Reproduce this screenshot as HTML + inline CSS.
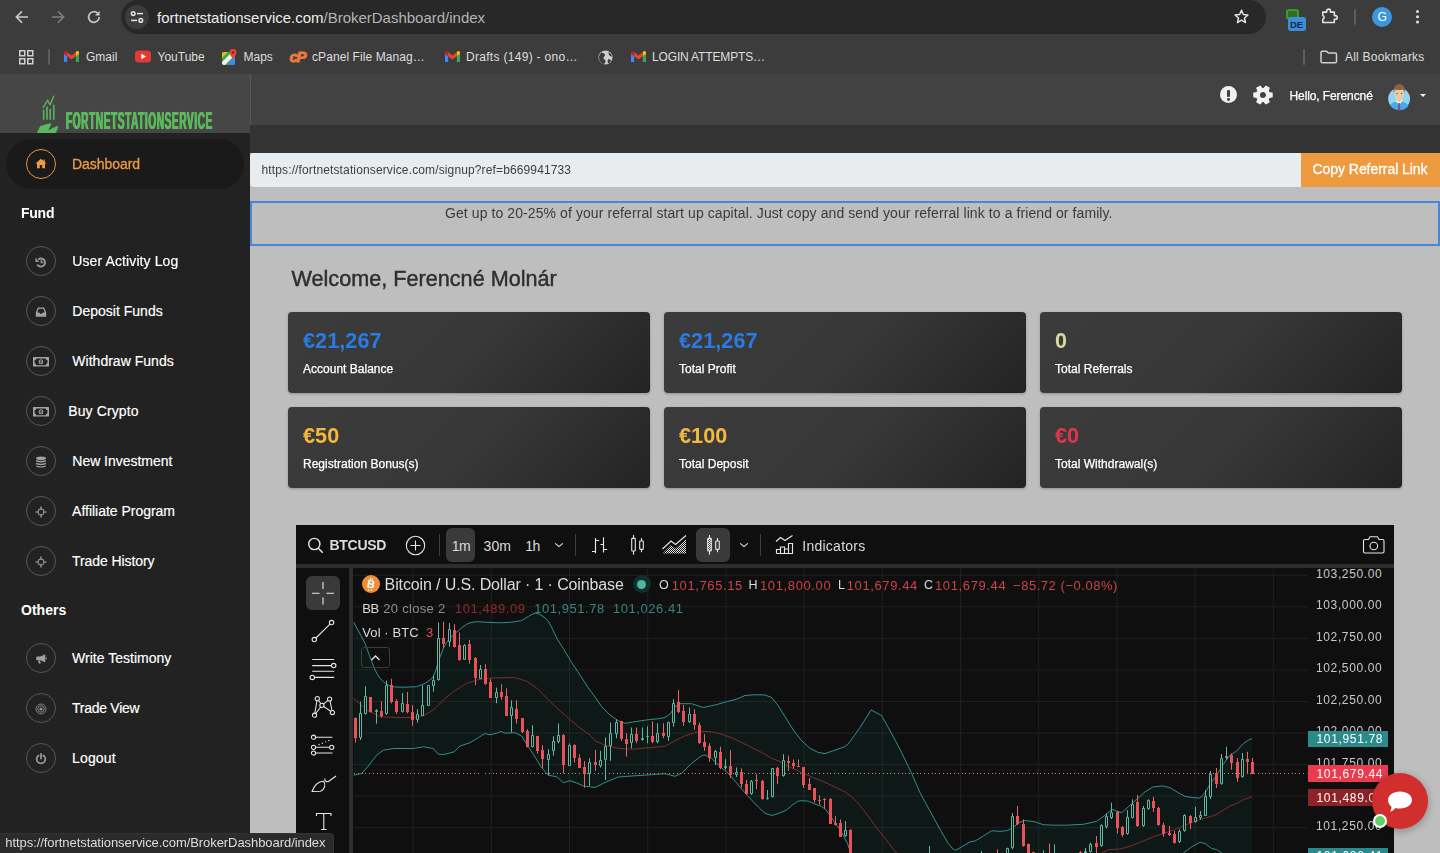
<!DOCTYPE html>
<html>
<head>
<meta charset="utf-8">
<title>Broker Dashboard</title>
<style>
*{box-sizing:border-box;margin:0;padding:0}
html,body{width:1440px;height:853px;overflow:hidden;background:#bebebe;font-family:"Liberation Sans",sans-serif;}
.abs{position:absolute}
#root{position:relative;width:1440px;height:853px;overflow:hidden;opacity:0.9999;will-change:opacity}
.t{position:absolute;white-space:nowrap;line-height:1;letter-spacing:0.01px}
/* browser chrome */
#chrome{left:0;top:0;width:1440px;height:74px;background:#3c3c3c}
#urlpill{left:120.500px;top:0;width:1145px;height:34px;border-radius:17px;background:#282828}
#siteinfo{left:125px;top:5px;width:24px;height:24px;border-radius:12px;background:#3c3c3c}
/* page */
#sbhead{left:0;top:74px;width:250px;height:59px;background:#464646}
#sidebar{left:0;top:133px;width:250px;height:720px;background:#222222}
#topbar{left:250px;top:74px;width:1190px;height:51px;background:#424242;border-left:1px solid #575757}
#band{left:250px;top:125px;width:1190px;height:28px;background:#333333}
#refinput{left:250px;top:153px;width:1051px;height:34px;background:#e9ecef;border-radius:4px 0 0 4px}
#refbtn{left:1301px;top:153px;width:139px;height:34px;background:#ee9b40}
#info{left:250px;top:201px;width:1190px;height:45px;border:2px solid #4786d8;background:#bebebe}
.bm{font-size:12px;color:#dedede}
.nav-c{position:absolute;width:30px;height:30px;border-radius:50%;border:1.200px solid #575757}
.nav-t{position:absolute;white-space:nowrap;color:#fff;font-size:15px;line-height:1;letter-spacing:0.01px;-webkit-text-stroke:0.18px #fff}
.card{position:absolute;width:362px;height:81px;border-radius:4px;background:linear-gradient(135deg,#3b3b3b 0%,#383838 50%,#232323 100%);box-shadow:0 1px 3px rgba(0,0,0,.25)}
.card .v{position:absolute;left:15px;top:18px;font-size:21.600px;font-weight:bold;line-height:1;white-space:nowrap;letter-spacing:0.08px}
.card .l{position:absolute;left:15px;top:51px;font-size:12px;color:#fff;line-height:1;white-space:nowrap;letter-spacing:0.01px;-webkit-text-stroke:0.25px #fff}
</style>
</head>
<body>
<div id="root">

<!-- ===== BROWSER CHROME ===== -->
<div id="chrome" class="abs"></div>
<div id="urlpill" class="abs"></div>
<div id="siteinfo" class="abs"></div>
<!--CHROME-ICONS-->
<!-- nav arrows -->
<svg class="abs" style="left:14px;top:9px" width="16" height="16" viewBox="0 0 16 16"><path d="M14 8H2.6M8 2.4L2.4 8L8 13.6" fill="none" stroke="#c7c7c7" stroke-width="1.7"/></svg>
<svg class="abs" style="left:50px;top:9px" width="16" height="16" viewBox="0 0 16 16"><path d="M2 8H13.4M8 2.4L13.6 8L8 13.6" fill="none" stroke="#7d7d7d" stroke-width="1.7"/></svg>
<svg class="abs" style="left:86px;top:9px" width="16" height="16" viewBox="0 0 16 16"><path d="M13.2 8A5.3 5.3 0 1 1 11.6 4.2" fill="none" stroke="#c7c7c7" stroke-width="1.7"/><path d="M13.6 1.8V6.4H9z" fill="#c7c7c7"/></svg>
<!-- site info icon -->
<svg class="abs" style="left:129px;top:9px" width="16" height="16" viewBox="0 0 16 16"><g fill="none" stroke="#e3e3e3" stroke-width="1.5"><circle cx="4.2" cy="4.6" r="1.8"/><path d="M8 4.6H14"/><circle cx="11.8" cy="11.4" r="1.8"/><path d="M2 11.4H8"/></g></svg>
<div class="t" style="left:157px;top:9.500px;font-size:15px;color:#ededed;letter-spacing:-0.01px">fortnetstationservice.com<span style="color:#b4b4b4">/BrokerDashboard/index</span></div>
<!-- star -->
<svg class="abs" style="left:1233px;top:8px" width="17" height="17" viewBox="0 0 24 24"><path d="M12 3.2l2.6 6 6.5.6-4.9 4.3 1.5 6.400-5.700-3.400-5.700 3.400 1.500-6.400-4.900-4.300 6.500-.6z" fill="none" stroke="#e3e3e3" stroke-width="2.1" stroke-linejoin="round"/></svg>
<!-- extension DE -->
<div class="abs" style="left:1286px;top:9px;width:13px;height:10px;border:2px solid #3f9a2e;border-radius:3px 3px 0 0;background:#2f6f24"></div>
<div class="abs" style="left:1288px;top:17px;width:18px;height:14px;border-radius:3px;background:#3f8fd6"></div>
<div class="t" style="left:1290px;top:19.500px;font-size:9.500px;font-weight:bold;color:#0b2a55;letter-spacing:-0.2px">DE</div>
<!-- puzzle -->
<svg class="abs" style="left:1319.500px;top:7px" width="18.500" height="17.600" viewBox="0 0 20 19"><path d="M3 5.500H7.300V4.300A2 2 0 0 1 11.300 4.300V5.500H15.500V9.300H16.600A2 2 0 0 1 16.600 13.300H15.500V16.800H3V13.200A2.100 2.100 0 0 0 3 9.200Z" fill="none" stroke="#e3e3e3" stroke-width="1.7" stroke-linejoin="round"/></svg>
<div class="abs" style="left:1354px;top:9px;width:2px;height:16px;background:#5e5e5e;border-radius:1px"></div>
<div class="abs" style="left:1372px;top:7px;width:20px;height:20px;border-radius:10px;background:#3d97de"></div>
<div class="t" style="left:1377.500px;top:11px;font-size:12px;color:#fff">G</div>
<div class="abs" style="left:1416px;top:10px;width:3.400px;height:3.400px;border-radius:2px;background:#e3e3e3;box-shadow:0 5.300px 0 #e3e3e3,0 10.600px 0 #e3e3e3"></div>
<!-- bookmarks bar -->
<svg class="abs" style="left:19px;top:50px" width="15" height="15" viewBox="0 0 15 15"><g fill="none" stroke="#d0d0d0" stroke-width="1.500"><rect x=".75" y=".75" width="5" height="5"/><rect x="8.750" y=".75" width="5" height="5"/><rect x=".75" y="8.750" width="5" height="5"/><rect x="8.750" y="8.750" width="5" height="5"/></g></svg>
<div class="abs" style="left:48px;top:49px;width:2px;height:16px;background:#5e5e5e;border-radius:1px"></div>
<!-- gmail icons -->
<svg class="abs gm" style="left:64px;top:51px" width="15" height="12" viewBox="0 0 15 12"><path d="M0 1.500V11h3.200V5.200z" fill="#4285f4"/><path d="M15 1.500V11h-3.200V5.200z" fill="#34a853"/><path d="M11.800 1.200V5.200L15 2.900V1.800C15 .3 13.400-.4 12.300.5z" fill="#fbbc04"/><path d="M3.200 1.200V5.200L0 2.900V1.800C0 .3 1.600-.4 2.700.5z" fill="#c5221f"/><path d="M3.200 5.200V1.200L7.500 4.400L11.800 1.200V5.200L7.500 8.400z" fill="#ea4335"/></svg>
<div class="t bm" style="left:86px;top:51px">Gmail</div>
<svg class="abs" style="left:135px;top:50px" width="16" height="13" viewBox="0 0 16 13"><rect x="0" y=".500" width="16" height="12" rx="3.500" fill="#e53935"/><path d="M6.300 3.800V9.200L11 6.500z" fill="#fff"/></svg>
<div class="t bm" style="left:157.500px;top:51px">YouTube</div>
<!-- maps -->
<svg class="abs" style="left:222px;top:49px" width="15" height="16" viewBox="0 0 15 16"><rect x="0" y="3" width="13" height="13" rx="2" fill="#34a853"/><path d="M0 13L9 4H13V6L3 16H2A2 2 0 0 1 0 14z" fill="#f1f1f1"/><path d="M5 16L13 8V14A2 2 0 0 1 11 16z" fill="#4285f4"/><path d="M0 5A2 2 0 0 1 2 3H6L0 9z" fill="#fbbc04" opacity=".9"/><path d="M11 0A3.500 3.500 0 0 1 14.500 3.500C14.500 6 11 9.500 11 9.500S7.500 6 7.500 3.500A3.500 3.500 0 0 1 11 0z" fill="#ea4335"/><circle cx="11" cy="3.500" r="1.200" fill="#8e1a13"/></svg>
<div class="t bm" style="left:243.500px;top:51px">Maps</div>
<!-- cpanel -->
<div class="t" style="left:289.500px;top:48.500px;font-size:15px;font-weight:bold;font-style:italic;color:#ee7a3a;letter-spacing:-1.300px;-webkit-text-stroke:0.900px #ee7a3a">cP</div>
<div class="t bm" style="left:312px;top:51px;letter-spacing:0.08px">cPanel File Manag…</div>
<svg class="abs" style="left:445px;top:51px" width="15" height="12" viewBox="0 0 15 12"><path d="M0 1.500V11h3.200V5.200z" fill="#4285f4"/><path d="M15 1.500V11h-3.200V5.200z" fill="#34a853"/><path d="M11.800 1.200V5.200L15 2.900V1.800C15 .3 13.400-.4 12.300.5z" fill="#fbbc04"/><path d="M3.200 1.200V5.200L0 2.900V1.800C0 .3 1.600-.4 2.700.5z" fill="#c5221f"/><path d="M3.200 5.200V1.200L7.500 4.400L11.800 1.200V5.200L7.500 8.400z" fill="#ea4335"/></svg>
<div class="t bm" style="left:466px;top:51px;letter-spacing:0.300px">Drafts (149) - ono…</div>
<!-- globe -->
<svg class="abs" style="left:598px;top:50px" width="15" height="15" viewBox="0 0 15 15"><circle cx="7.500" cy="7.500" r="7" fill="#d0d0d0"/><path d="M3.500 2.500C5 3.500 6.500 3 7 4.500S5 7 5.500 8.500S8 9.500 7.500 11.500S6 13.500 6.500 14.300C3 13.500 1 11 1 7.500C1 5.500 2 3.500 3.500 2.500zM10 2C11 3 10.500 4.500 11.500 5.500S13.500 6 14 7C14 5 12.500 2.800 10 2zM10 9.500C11 9 12.500 9.500 13 10.500C12.500 12 11.500 13 10 13.500C9.500 12.500 9.500 10.500 10 9.500z" fill="#3c3c3c"/></svg>
<svg class="abs" style="left:631px;top:51px" width="15" height="12" viewBox="0 0 15 12"><path d="M0 1.500V11h3.200V5.200z" fill="#4285f4"/><path d="M15 1.500V11h-3.200V5.200z" fill="#34a853"/><path d="M11.800 1.200V5.200L15 2.900V1.800C15 .3 13.400-.4 12.300.5z" fill="#fbbc04"/><path d="M3.200 1.200V5.200L0 2.900V1.800C0 .3 1.600-.4 2.700.5z" fill="#c5221f"/><path d="M3.200 5.200V1.200L7.500 4.400L11.800 1.200V5.200L7.500 8.400z" fill="#ea4335"/></svg>
<div class="t bm" style="left:652px;top:51px;letter-spacing:-0.150px">LOGIN ATTEMPTS…</div>
<div class="abs" style="left:1303px;top:49px;width:2px;height:16px;background:#5e5e5e;border-radius:1px"></div>
<svg class="abs" style="left:1320px;top:50px" width="18" height="14" viewBox="0 0 18 14"><path d="M1 2.500A1.300 1.300 0 0 1 2.300 1.200H6.500L8.300 3H15.200A1.300 1.300 0 0 1 16.500 4.300V11.500A1.300 1.300 0 0 1 15.200 12.800H2.300A1.300 1.300 0 0 1 1 11.500z" fill="none" stroke="#d0d0d0" stroke-width="1.500"/></svg>
<div class="t bm" style="left:1345px;top:51px;letter-spacing:0.220px">All Bookmarks</div>
<!--CHROME-ICONS-END-->

<!-- ===== PAGE ===== -->
<div id="sbhead" class="abs"></div>
<div id="sidebar" class="abs"></div>
<div id="topbar" class="abs"></div>
<div id="band" class="abs"></div>
<div id="refinput" class="abs"></div>
<div id="refbtn" class="abs"></div>
<div id="info" class="abs"></div>
<!--PAGE-CONTENT-->
<svg class="abs" style="left:34px;top:92px" width="28" height="41" viewBox="0 0 28 41">
<g fill="#5cb85c">
<rect x="8.800" y="17.700" width="1.700" height="10" opacity=".92"/><rect x="12.150" y="14.500" width="1.700" height="13.200" opacity=".92"/><rect x="15.350" y="16.800" width="1.700" height="10.900" opacity=".92"/><rect x="18.900" y="12.700" width="1.700" height="15" opacity=".92"/>
<path d="M9.200 15.400L13.600 8.300L15.900 13L19.750 4.200" fill="none" stroke="#5cb85c" stroke-width="1.350" stroke-linejoin="round" stroke-linecap="round"/>
<path d="M3 40.600L6.300 34.100L14.200 31.800L16.500 31.200C17.300 32 17.200 32.800 16.800 33.500L14.200 38.200L23 34.100C23.900 34.500 24.100 35.300 23.900 35.900L21.800 41H3z"/>
</g></svg>
<div class="t" style="left:65.900px;top:110.030px;font-size:23px;font-weight:bold;color:#5cb85c;transform-origin:0 0;transform:scaleX(0.437);letter-spacing:1.400px;text-shadow:0.900px 0 0 #5cb85c,-0.900px 0 0 #5cb85c,0 0 1.200px rgba(92,184,92,.7)">FORTNETSTATIONSERVICE</div>
<div class="abs" style="left:6px;top:139px;width:238px;height:50px;border-radius:25px;background:#1a1a1a"></div>
<div class="abs" style="left:25.500px;top:148.500px;width:30.500px;height:30.500px;border-radius:50%;border:1.200px solid #e8953e"></div>
<svg class="abs" style="left:35px;top:158px" width="12" height="11" viewBox="0 0 12 11"><path d="M6 .8L.5 5.600H2V10.200H4.800V7H7.200V10.200H10V5.600H11.500L9.800 4.100V1.500H8.600V3z" fill="#ee9b40"/></svg>
<div class="t" style="left:72px;top:157.15px;font-size:14px;color:#ee9b40;letter-spacing:-0.05px;-webkit-text-stroke:0.300px #ee9b40">Dashboard</div>
<div class="t" style="left:21px;top:206.15px;font-size:14px;color:#fff;font-weight:bold;letter-spacing:-0.25px">Fund</div>
<div class="t" style="left:21px;top:603.15px;font-size:14px;color:#fff;font-weight:bold">Others</div>
<div class="nav-c" style="left:26px;top:246px"></div>
<svg class="abs" style="left:35px;top:255.6px;overflow:visible" width="12" height="12" viewBox="0 0 12 12"><g transform="translate(0,0.200)"><path d="M3.300 3.200A4.100 4.100 0 1 1 2.300 8.300" fill="none" stroke="#979797" stroke-width="1.900"/><path d="M.4 1.600L.4 5.700H4.500z" fill="#979797"/><path d="M6.300 3.900V6.300H8.300" fill="none" stroke="#979797" stroke-width="1.300"/></g></svg>
<div class="nav-t" style="left:72.3px;top:254.15px;font-size:14px;color:#fff;letter-spacing:0.108px">User Activity Log</div>
<div class="nav-c" style="left:26px;top:296px"></div>
<svg class="abs" style="left:35px;top:305.6px;overflow:visible" width="12" height="12" viewBox="0 0 12 12"><path d="M.8 10.700V6.500L2.900 1.400H9.100L11.200 6.500V10.700zM3.700 2.800L2.300 6.400H4.200L5 7.700H7L7.800 6.400H9.700L8.300 2.800z" fill="#a4a4a4" fill-rule="evenodd"/></svg>
<div class="nav-t" style="left:72.3px;top:304.15px;font-size:14px;color:#fff;letter-spacing:0.01px">Deposit Funds</div>
<div class="nav-c" style="left:26px;top:346px"></div>
<svg class="abs" style="left:35px;top:355.6px;overflow:visible" width="12" height="12" viewBox="0 0 12 12"><g transform="translate(-2,1.100)"><rect x="0" y="0" width="16" height="9.400" rx=".6" fill="#a4a4a4"/><path d="M3.200 1.300H12.800C12.800 2.200 13.500 2.900 14.400 2.900V6.500C13.500 6.500 12.800 7.200 12.800 8.100H3.200C3.200 7.200 2.500 6.500 1.600 6.500V2.900C2.500 2.900 3.200 2.200 3.200 1.300z" fill="#222"/><ellipse cx="8" cy="4.700" rx="2.300" ry="2.500" fill="#b0b0b0"/><path d="M7.200 3.300H8.800V6.100H7.200zM7.200 4.500H8.800" fill="none" stroke="#333" stroke-width=".7"/></g></svg>
<div class="nav-t" style="left:72.3px;top:354.15px;font-size:14px;color:#fff;letter-spacing:0.02px">Withdraw Funds</div>
<div class="nav-c" style="left:26px;top:396px"></div>
<svg class="abs" style="left:35px;top:405.6px;overflow:visible" width="12" height="12" viewBox="0 0 12 12"><g transform="translate(-2,1.100)"><rect x="0" y="0" width="16" height="9.400" rx=".6" fill="#a4a4a4"/><path d="M3.200 1.300H12.800C12.800 2.200 13.500 2.900 14.400 2.900V6.500C13.500 6.500 12.800 7.200 12.800 8.100H3.200C3.200 7.200 2.500 6.500 1.600 6.500V2.900C2.500 2.900 3.200 2.200 3.200 1.300z" fill="#222"/><ellipse cx="8" cy="4.700" rx="2.300" ry="2.500" fill="#b0b0b0"/><path d="M7.200 3.300H8.800V6.100H7.200zM7.200 4.500H8.800" fill="none" stroke="#333" stroke-width=".7"/></g></svg>
<div class="nav-t" style="left:68.2px;top:404.15px;font-size:14px;color:#fff;letter-spacing:0.117px">Buy Crypto</div>
<div class="nav-c" style="left:26px;top:446px"></div>
<svg class="abs" style="left:35px;top:455.6px;overflow:visible" width="12" height="12" viewBox="0 0 12 12"><ellipse cx="6" cy="2.300" rx="5" ry="1.800" fill="#a0a0a0"/><path d="M1 3.700C2 5.200 10 5.200 11 3.700V5.300C10 6.800 2 6.800 1 5.300z" fill="#a0a0a0"/><path d="M1 6.500C2 8 10 8 11 6.500V8.100C10 9.600 2 9.600 1 8.100z" fill="#a0a0a0"/><path d="M1 9.300C2 10.800 10 10.800 11 9.300V10.200C10 12 2 12 1 10.200z" fill="#a0a0a0"/></svg>
<div class="nav-t" style="left:72.3px;top:454.15px;font-size:14px;color:#fff;letter-spacing:-0.02px">New Investment</div>
<div class="nav-c" style="left:26px;top:496px"></div>
<svg class="abs" style="left:35px;top:505.6px;overflow:visible" width="12" height="12" viewBox="0 0 12 12"><circle cx="6" cy="6" r="2.900" fill="none" stroke="#8c8c8c" stroke-width="1.100"/><path d="M6 .6V3.200M6 8.800V11.400M.6 6H3.200M8.800 6H11.400" stroke="#8c8c8c" stroke-width="1.600"/></svg>
<div class="nav-t" style="left:72.1px;top:504.15px;font-size:14px;color:#fff;letter-spacing:-0.02px">Affiliate Program</div>
<div class="nav-c" style="left:26px;top:546px"></div>
<svg class="abs" style="left:35px;top:555.6px;overflow:visible" width="12" height="12" viewBox="0 0 12 12"><circle cx="6" cy="6" r="2.900" fill="none" stroke="#8c8c8c" stroke-width="1.100"/><path d="M6 .6V3.200M6 8.800V11.400M.6 6H3.200M8.800 6H11.400" stroke="#8c8c8c" stroke-width="1.600"/></svg>
<div class="nav-t" style="left:72.1px;top:554.15px;font-size:14px;color:#fff;letter-spacing:-0.093px">Trade History</div>
<div class="nav-c" style="left:26px;top:643px"></div>
<svg class="abs" style="left:35px;top:652.6px;overflow:visible" width="12" height="12" viewBox="0 0 12 12"><path d="M10.200 1.200V9.400L5.400 7.200H2.200A1 1 0 0 1 1.200 6.200V4.400A1 1 0 0 1 2.200 3.400H5.400z" fill="#a0a0a0"/><path d="M3 7.400H5L5.800 10.600H3.800z" fill="#a0a0a0"/><rect x="10.600" y="4.200" width="1" height="2.200" fill="#a0a0a0"/></svg>
<div class="nav-t" style="left:72.1px;top:651.15px;font-size:14px;color:#fff;letter-spacing:0.01px">Write Testimony</div>
<div class="nav-c" style="left:26px;top:693px"></div>
<svg class="abs" style="left:35px;top:702.6px;overflow:visible" width="12" height="12" viewBox="0 0 12 12"><circle cx="6" cy="6" r="5" fill="none" stroke="#808080" stroke-width="1"/><circle cx="6" cy="6" r="3.200" fill="none" stroke="#808080" stroke-width="1"/><circle cx="6" cy="6" r="1.600" fill="#909090"/></svg>
<div class="nav-t" style="left:72.1px;top:701.15px;font-size:14px;color:#fff;letter-spacing:-0.283px">Trade View</div>
<div class="nav-c" style="left:26px;top:743px"></div>
<svg class="abs" style="left:35px;top:752.6px;overflow:visible" width="12" height="12" viewBox="0 0 12 12"><path d="M3.600 2.600A4.300 4.300 0 1 0 8.400 2.600" fill="none" stroke="#979797" stroke-width="1.800" stroke-linecap="round"/><path d="M6 .8V5.600" stroke="#979797" stroke-width="1.800" stroke-linecap="round"/></svg>
<div class="nav-t" style="left:72.1px;top:751.15px;font-size:14px;color:#fff;letter-spacing:0.134px">Logout</div>
<div class="abs" style="left:1220.200px;top:86.100px;width:17px;height:17px;border-radius:50%;background:#f1f1f1"></div>
<div class="abs" style="left:1227.300px;top:89.500px;width:2.600px;height:7px;border-radius:1px;background:#424242"></div><div class="abs" style="left:1227.200px;top:98px;width:2.800px;height:2.800px;border-radius:50%;background:#3e3e3e"></div>
<svg class="abs" style="left:1252.700px;top:84.600px" width="20" height="20" viewBox="0 0 20 20"><path d="M19.11 8.15L19.11 11.85L16.18 12.33L15.10 14.19L16.16 16.97L12.96 18.82L11.07 16.51L8.93 16.51L7.04 18.82L3.84 16.97L4.90 14.19L3.82 12.33L0.89 11.85L0.89 8.15L3.82 7.67L4.90 5.81L3.84 3.03L7.04 1.18L8.93 3.49L11.07 3.49L12.96 1.18L16.16 3.03L15.10 5.81L16.18 7.67Z M13.600 10A3.600 3.600 0 1 0 6.400 10A3.600 3.600 0 1 0 13.600 10Z" fill="#f1f1f1" fill-rule="evenodd" stroke="#f1f1f1" stroke-width="1.200" stroke-linejoin="round"/></svg>
<div class="t" style="left:1289.5px;top:89.84px;font-size:12px;color:#fff;letter-spacing:-0.1px;-webkit-text-stroke:0.250px #fff">Hello, Ferencné</div>
<svg class="abs" style="left:1387px;top:83px" width="24" height="28" viewBox="0 0 24 28">
<defs><clipPath id="avc"><path d="M0 0H24V15.800A10.900 10.900 0 0 1 1.200 15.800V0z"/></clipPath></defs>
<circle cx="12.100" cy="15.800" r="10.900" fill="#93d4f4"/>
<g clip-path="url(#avc)">
<path d="M1 28C1.500 21.500 6 18.600 12.100 18.600S22.700 21.500 23.200 28z" fill="#46a9ea"/>
<path d="M8.600 17.600L12.100 22.200L15.600 17.600L13.800 16.500H10.400z" fill="#f2f7fa"/>
<path d="M11.300 20H12.900L13.300 27H10.900z" fill="#8a4a8f"/>
<rect x="10.500" y="14.500" width="3.200" height="4.200" fill="#e3bb93"/>
<ellipse cx="12.200" cy="11.300" rx="5" ry="5.700" fill="#eccba6"/>
<path d="M6.900 10.500C6 4.500 8.500 1 12.300 1S18.600 4.500 17.600 10.500C17.200 8 16.500 7.200 15.500 6.600C13.500 7.400 10 7.200 8.500 6.500C7.600 7.300 7.200 8.300 6.900 10.500z" fill="#96603a"/>
<circle cx="10" cy="10.600" r=".75" fill="#6b5433"/><circle cx="14.600" cy="10.600" r=".75" fill="#6b5433"/>
</g></svg>
<div class="abs" style="left:1419.800px;top:93.800px;width:0;height:0;border-left:3.200px solid transparent;border-right:3.200px solid transparent;border-top:3.300px solid #f4f4f4"></div>
<div class="t" style="left:261.5px;top:163.84px;font-size:12px;color:#3a3f45;letter-spacing:0.13px">https://fortnetstationservice.com/signup?ref=b669941733</div>
<div class="t" style="left:1312.5px;top:162.15px;font-size:14px;color:#fff;letter-spacing:-0.05px;-webkit-text-stroke:0.300px #fff">Copy Referral Link</div>
<div class="t" style="left:445px;top:206.15px;font-size:14px;color:#3b3b3b;letter-spacing:0.085px">Get up to 20-25% of your referral start up capital. Just copy and send your referral link to a friend or family.</div>
<div class="t" style="left:291.5px;top:267.72px;font-size:21.6px;color:#2f2f2f;-webkit-text-stroke:0.450px #2f2f2f;letter-spacing:0.02px">Welcome, Ferencné Molnár</div>
<div class="card" style="left:288px;top:312px"><div class="v" style="color:#2a7be4">€21,267</div><div class="l">Account Balance</div></div>
<div class="card" style="left:664px;top:312px"><div class="v" style="color:#2a7be4">€21,267</div><div class="l">Total Profit</div></div>
<div class="card" style="left:1040px;top:312px"><div class="v" style="color:#d9d6a0">0</div><div class="l">Total Referrals</div></div>
<div class="card" style="left:288px;top:407px"><div class="v" style="color:#f5b83d">€50</div><div class="l">Registration Bonus(s)</div></div>
<div class="card" style="left:664px;top:407px"><div class="v" style="color:#f5b83d">€100</div><div class="l">Total Deposit</div></div>
<div class="card" style="left:1040px;top:407px"><div class="v" style="color:#e0364c">€0</div><div class="l">Total Withdrawal(s)</div></div>
<!--PAGE-CONTENT-END-->

<!--CHART-->
<div class="abs" style="left:296px;top:525px;width:1098px;height:328px;background:#0f0f0f"></div>
<div class="abs" style="left:296px;top:564px;width:1098px;height:4px;background:#2d2d2d"></div>
<div class="abs" style="left:349.300px;top:568px;width:4px;height:285px;background:#2d2d2d"></div>
<svg class="abs" style="left:296px;top:525px" width="1098" height="328" viewBox="0 0 1098 328" shape-rendering="auto"><defs><clipPath id="pane"><rect x="57.500" y="43" width="954" height="285"/></clipPath></defs><path d="M977.3 43V328M899.1 43V328M820.9 43V328M742.7 43V328M664.5 43V328M586.3 43V328M508.1 43V328M429.9 43V328M351.7 43V328M273.5 43V328M195.3 43V328M117.1 43V328M57.500 50.3H1012M57.500 81.8H1012M57.500 113.4H1012M57.500 144.9H1012M57.500 176.5H1012M57.500 208.0H1012M57.500 239.6H1012M57.500 271.1H1012M57.500 302.7H1012" stroke="#202020" stroke-width="1" fill="none"/><g clip-path="url(#pane)"><path d="M57.3 96.7L63.0 107.0L69.0 118.3L74.0 132.0L79.0 145.0L83.0 152.0L87.3 156.7L93.0 160.5L99.0 162.0L109.0 162.2L120.7 161.7L129.0 158.3L134.0 155.0L137.3 151.7L140.0 145.0L142.3 136.7L147.3 123.3L150.5 117.5L154.0 113.3L158.0 109.0L162.3 105.8L166.0 102.5L170.7 99.2L175.0 97.5L180.7 96.7L192.0 97.3L204.0 97.8L215.7 97.2L225.7 95.5L232.3 91.5L236.0 89.3L239.8 88.0L244.0 89.5L248.0 92.0L252.3 96.0L256.0 103.0L260.7 113.0L267.3 123.5L275.7 137.5L284.0 150.0L292.3 163.0L297.3 169.5L305.7 181.7L314.0 190.0L322.3 195.8L329.0 198.3L339.0 196.7L352.3 194.7L362.3 193.7L369.0 192.5L374.0 189.2L379.0 181.7L384.0 178.7L395.7 178.7L407.3 182.5L419.0 180.0L430.7 176.7L440.7 174.2L449.0 170.5L459.0 169.7L469.0 170.0L475.7 172.5L482.3 180.8L489.0 191.7L497.3 205.0L505.7 215.8L514.0 223.3L522.3 227.5L529.0 228.5L539.0 225.2L549.0 221.5L553.0 218.0L557.3 212.0L564.0 202.5L570.0 193.0L575.1 184.9L580.0 187.5L585.7 190.6L590.0 198.5L595.7 208.6L605.7 227.7L615.7 248.5L624.0 267.7L634.0 286.0L644.0 304.3L652.3 318.5L657.3 324.3L659.8 325.2L665.7 321.8L674.0 316.8L679.0 316.0L687.3 311.0L695.7 305.7L704.0 306.3L710.7 305.7L717.3 302.7L722.3 297.7L729.0 295.5L739.0 296.8L747.3 299.7L757.3 300.2L770.7 300.2L787.3 299.3L800.7 296.3L809.0 290.2L815.7 284.3L820.7 286.0L825.7 287.7L832.3 281.8L840.7 274.3L849.0 266.8L857.3 261.8L867.3 261.0L874.0 262.7L882.3 267.7L889.0 271.3L897.3 272.7L904.0 273.0L909.0 267.7L914.0 259.3L920.7 250.2L927.3 239.3L934.0 230.2L940.7 226.0L947.3 218.5L952.3 215.2L956.0 213.5L956.0 345.0L925.7 328.0L920.7 324.7L915.7 323.5L909.0 318.5L904.0 317.3L895.7 321.8L887.3 328.0L874.0 355.0L704.0 375.0L564.0 355.0L554.8 328.0L551.6 318.9L547.2 310.2L542.9 303.1L538.5 297.1L534.1 290.6L529.8 284.6L525.4 281.3L518.9 279.1L512.3 276.2L505.8 275.7L501.4 276.4L496.0 280.2L490.5 285.1L484.0 287.9L476.0 290.5L469.0 288.3L462.3 282.0L452.3 271.7L442.3 260.0L432.3 248.3L422.3 240.0L415.7 233.3L409.0 230.0L405.7 230.8L395.7 238.3L385.7 248.3L379.0 251.3L369.0 248.7L355.7 249.7L339.0 250.8L322.3 252.0L309.0 257.5L299.0 262.5L294.0 261.8L287.3 261.0L280.7 258.0L274.0 255.7L267.3 257.7L260.7 251.8L252.3 250.2L245.7 242.7L237.3 229.3L230.7 219.3L225.7 211.0L219.0 207.7L209.0 208.2L204.8 206.5L200.7 208.2L194.0 209.8L189.0 208.5L182.3 212.7L174.0 217.7L164.0 221.0L158.2 226.8L149.0 229.3L142.3 229.3L137.3 223.5L127.3 221.8L117.3 223.5L97.3 223.5L87.3 225.2L80.7 230.2L72.3 241.0L65.7 248.5L57.3 250.2Z" fill="rgba(20,150,140,0.075)"/><path d="M57.3 96.7L63.0 107.0L69.0 118.3L74.0 132.0L79.0 145.0L83.0 152.0L87.3 156.7L93.0 160.5L99.0 162.0L109.0 162.2L120.7 161.7L129.0 158.3L134.0 155.0L137.3 151.7L140.0 145.0L142.3 136.7L147.3 123.3L150.5 117.5L154.0 113.3L158.0 109.0L162.3 105.8L166.0 102.5L170.7 99.2L175.0 97.5L180.7 96.7L192.0 97.3L204.0 97.8L215.7 97.2L225.7 95.5L232.3 91.5L236.0 89.3L239.8 88.0L244.0 89.5L248.0 92.0L252.3 96.0L256.0 103.0L260.7 113.0L267.3 123.5L275.7 137.5L284.0 150.0L292.3 163.0L297.3 169.5L305.7 181.7L314.0 190.0L322.3 195.8L329.0 198.3L339.0 196.7L352.3 194.7L362.3 193.7L369.0 192.5L374.0 189.2L379.0 181.7L384.0 178.7L395.7 178.7L407.3 182.5L419.0 180.0L430.7 176.7L440.7 174.2L449.0 170.5L459.0 169.7L469.0 170.0L475.7 172.5L482.3 180.8L489.0 191.7L497.3 205.0L505.7 215.8L514.0 223.3L522.3 227.5L529.0 228.5L539.0 225.2L549.0 221.5L553.0 218.0L557.3 212.0L564.0 202.5L570.0 193.0L575.1 184.9L580.0 187.5L585.7 190.6L590.0 198.5L595.7 208.6L605.7 227.7L615.7 248.5L624.0 267.7L634.0 286.0L644.0 304.3L652.3 318.5L657.3 324.3L659.8 325.2L665.7 321.8L674.0 316.8L679.0 316.0L687.3 311.0L695.7 305.7L704.0 306.3L710.7 305.7L717.3 302.7L722.3 297.7L729.0 295.5L739.0 296.8L747.3 299.7L757.3 300.2L770.7 300.2L787.3 299.3L800.7 296.3L809.0 290.2L815.7 284.3L820.7 286.0L825.7 287.7L832.3 281.8L840.7 274.3L849.0 266.8L857.3 261.8L867.3 261.0L874.0 262.7L882.3 267.7L889.0 271.3L897.3 272.7L904.0 273.0L909.0 267.7L914.0 259.3L920.7 250.2L927.3 239.3L934.0 230.2L940.7 226.0L947.3 218.5L952.3 215.2L956.0 213.5" fill="none" stroke="#30908a" stroke-width="1" stroke-linejoin="round"/><path d="M57.3 250.2L65.7 248.5L72.3 241.0L80.7 230.2L87.3 225.2L97.3 223.5L117.3 223.5L127.3 221.8L137.3 223.5L142.3 229.3L149.0 229.3L158.2 226.8L164.0 221.0L174.0 217.7L182.3 212.7L189.0 208.5L194.0 209.8L200.7 208.2L204.8 206.5L209.0 208.2L219.0 207.7L225.7 211.0L230.7 219.3L237.3 229.3L245.7 242.7L252.3 250.2L260.7 251.8L267.3 257.7L274.0 255.7L280.7 258.0L287.3 261.0L294.0 261.8L299.0 262.5L309.0 257.5L322.3 252.0L339.0 250.8L355.7 249.7L369.0 248.7L379.0 251.3L385.7 248.3L395.7 238.3L405.7 230.8L409.0 230.0L415.7 233.3L422.3 240.0L432.3 248.3L442.3 260.0L452.3 271.7L462.3 282.0L469.0 288.3L476.0 290.5L484.0 287.9L490.5 285.1L496.0 280.2L501.4 276.4L505.8 275.7L512.3 276.2L518.9 279.1L525.4 281.3L529.8 284.6L534.1 290.6L538.5 297.1L542.9 303.1L547.2 310.2L551.6 318.9L554.8 328.0L564.0 355.0L704.0 375.0L874.0 355.0L887.3 328.0L895.7 321.8L904.0 317.3L909.0 318.5L915.7 323.5L920.7 324.7L925.7 328.0L956.0 345.0" fill="none" stroke="#30908a" stroke-width="1" stroke-linejoin="round"/><path d="M57.3 173.3L70.7 185.0L84.0 191.7L100.7 192.5L117.3 192.5L127.3 190.8L137.3 185.0L147.3 175.0L157.3 166.7L170.7 158.3L184.0 154.2L197.3 153.0L214.0 152.5L220.7 153.0L230.7 156.3L240.7 163.0L250.7 173.0L260.7 183.0L270.7 191.7L282.3 201.7L294.0 210.0L299.0 215.8L310.7 220.8L322.3 223.3L335.7 224.2L352.3 222.8L369.0 221.3L379.0 215.8L389.0 210.8L399.0 207.5L405.7 206.3L415.7 206.7L425.7 209.2L439.0 214.2L452.3 220.8L465.7 227.5L475.7 233.3L484.0 236.6L494.9 242.6L505.8 247.5L516.7 252.4L527.6 256.8L538.5 261.7L549.4 267.2L554.8 271.0L560.3 276.4L566.8 284.0L573.4 292.8L579.9 302.0L586.5 310.2L593.0 318.4L598.4 325.5L600.6 328.0L614.0 345.0L704.0 375.0L794.0 345.0L805.7 328.0L812.3 324.7L824.0 324.0L834.0 321.3L847.3 316.0L857.3 311.8L867.3 308.5L877.3 305.2L887.3 301.0L897.3 296.8L907.3 293.5L919.0 290.2L927.3 285.2L934.0 281.0L940.7 278.5L947.3 274.7L956.0 271.8" fill="none" stroke="#822c2c" stroke-width="1" stroke-linejoin="round"/><path d="M58 248.5H1012" stroke="#e67c7c" stroke-width="1" stroke-dasharray="1 2.750" fill="none" shape-rendering="crispEdges"/><path d="M59.5 192.5V217.5M74.5 172.0V187.5M85.5 176.3V192.5M95.5 153.8V178.3M100.5 174.2V188.7M111.5 167.0V188.3M116.5 180.0V200.8M147.5 96.7V123.3M158.5 99.2V122.5M163.5 107.5V135.8M173.5 115.0V138.7M179.5 132.0V160.0M189.5 139.2V159.7M194.5 154.2V173.0M205.5 159.2V174.7M210.5 163.3V190.8M220.5 175.3V198.7M226.5 193.0V208.0M231.5 204.2V222.5M241.5 210.8V228.7M246.5 220.2V243.5M267.5 209.3V248.5M278.5 219.3V237.7M283.5 229.3V243.0M288.5 236.0V262.7M299.5 225.0V245.8M325.5 195.8V215.8M330.5 208.3V231.7M340.5 202.5V218.3M356.5 196.3V218.3M367.5 198.3V213.3M382.5 165.0V188.0M387.5 180.0V200.8M398.5 184.2V204.7M403.5 197.5V218.7M408.5 209.2V225.8M413.5 218.3V236.7M424.5 221.7V244.2M434.5 225.0V253.0M445.5 243.3V262.5M450.5 255.0V270.0M460.5 249.2V264.2M466.5 255.0V274.7M481.5 241.7V259.2M492.5 230.6V245.9M497.5 234.5V243.7M502.5 234.5V241.5M507.5 242.1V262.8M513.5 253.0V265.0M518.5 263.3V277.5M523.5 270.4V279.7M528.5 273.1V284.0M534.5 273.1V298.8M539.5 291.1V300.4M544.5 294.4V311.8M554.5 304.2V333.1M701.5 324.3V336.0M721.5 281.0V300.2M727.5 294.3V321.8M732.5 318.5V336.0M737.5 326.8V336.0M753.5 318.5V336.0M784.5 326.0V336.0M800.5 311.0V328.0M821.5 286.0V308.5M826.5 301.0V311.8M841.5 270.2V301.8M857.5 271.8V286.8M862.5 281.8V300.7M867.5 297.7V311.8M873.5 301.0V311.0M878.5 306.0V318.5M894.5 290.2V304.0M920.5 243.0V263.0M935.5 228.5V244.7M941.5 233.0V256.8M951.5 226.8V249.0M956.5 233.0V249.0" stroke="#e8666b" stroke-width="1" fill="none"/><path d="M58.0 193.0h3V213.0h-3zM73.0 172.0h3V187.0h-3zM84.0 186.0h3V191.0h-3zM94.0 160.0h3V177.0h-3zM99.0 176.0h3V187.0h-3zM110.0 179.0h3V187.0h-3zM115.0 187.0h3V195.0h-3zM146.0 113.0h3V119.0h-3zM157.0 105.0h3V122.0h-3zM162.0 120.0h3V135.0h-3zM172.0 119.0h3V135.0h-3zM178.0 133.0h3V153.0h-3zM188.0 144.0h3V159.0h-3zM193.0 157.0h3V173.0h-3zM204.0 167.0h3V172.0h-3zM209.0 171.0h3V191.0h-3zM219.0 184.0h3V194.0h-3zM225.0 193.0h3V207.0h-3zM230.0 206.0h3V222.0h-3zM240.0 211.0h3V226.0h-3zM245.0 225.0h3V234.0h-3zM266.0 210.0h3V240.0h-3zM277.0 220.0h3V233.0h-3zM282.0 233.0h3V243.0h-3zM287.0 242.0h3V249.0h-3zM298.0 237.0h3V240.0h-3zM324.0 196.0h3V214.0h-3zM329.0 214.0h3V219.0h-3zM339.0 209.0h3V216.0h-3zM355.0 211.0h3V217.0h-3zM366.0 208.0h3V211.0h-3zM381.0 177.0h3V187.0h-3zM386.0 186.0h3V197.0h-3zM397.0 189.0h3V200.0h-3zM402.0 200.0h3V218.0h-3zM407.0 217.0h3V222.0h-3zM412.0 221.0h3V233.0h-3zM423.0 227.0h3V243.0h-3zM433.0 241.0h3V250.0h-3zM444.0 247.0h3V259.0h-3zM449.0 259.0h3V269.0h-3zM459.0 255.0h3V256.0h-3zM465.0 256.0h3V274.0h-3zM480.0 243.0h3V251.0h-3zM491.0 236.0h3V238.0h-3zM496.0 238.0h3V241.0h-3zM501.0 241.0h3V242.0h-3zM506.0 242.0h3V260.0h-3zM512.0 259.0h3V265.0h-3zM517.0 263.0h3V275.0h-3zM522.0 275.0h3V276.0h-3zM527.0 274.0h3V275.0h-3zM533.0 274.0h3V299.0h-3zM538.0 298.0h3V300.0h-3zM543.0 298.0h3V312.0h-3zM553.0 305.0h3V333.0h-3zM700.0 336.0h3V337.0h-3zM720.0 291.0h3V299.0h-3zM726.0 299.0h3V321.0h-3zM731.0 319.0h3V336.0h-3zM736.0 327.0h3V336.0h-3zM752.0 336.0h3V337.0h-3zM783.0 327.0h3V336.0h-3zM799.0 318.0h3V322.0h-3zM820.0 287.0h3V303.0h-3zM825.0 302.0h3V310.0h-3zM840.0 277.0h3V301.0h-3zM856.0 276.0h3V283.0h-3zM861.0 283.0h3V300.0h-3zM866.0 300.0h3V309.0h-3zM872.0 308.0h3V310.0h-3zM877.0 309.0h3V318.0h-3zM893.0 291.0h3V298.0h-3zM919.0 248.0h3V259.0h-3zM934.0 230.0h3V238.0h-3zM940.0 237.0h3V253.0h-3zM950.0 234.0h3V237.0h-3zM955.0 237.0h3V249.0h-3z" fill="#ea5259"/><path d="M64.5 176.7V188.0M64.5 213.0V215.0M69.5 161.3V171.0M69.5 189.0V189.5M80.5 184.2V185.0M80.5 187.0V198.7M90.5 155.5V160.0M90.5 189.0V190.0M106.5 168.0V178.0M106.5 187.0V187.5M121.5 184.2V189.0M121.5 195.0V197.5M126.5 160.3V180.0M137.5 150.8V155.0M137.5 161.0V166.7M142.5 97.5V113.0M142.5 155.0V155.8M153.5 98.0V104.0M153.5 117.0V121.7M168.5 119.2V120.0M184.5 140.0V144.0M184.5 154.0V154.2M200.5 162.5V167.0M200.5 173.0V178.3M215.5 175.3V182.0M215.5 191.0V207.5M236.5 200.3V210.0M236.5 222.0V222.5M252.5 224.3V229.0M252.5 235.0V250.2M257.5 211.3V216.0M257.5 226.0V230.7M262.5 198.5V210.0M262.5 217.0V218.5M273.5 218.5V220.0M293.5 233.3V237.0M293.5 249.0V260.8M304.5 225.8V235.0M304.5 241.0V242.5M309.5 212.5V221.0M309.5 235.0V255.0M314.5 197.5V208.0M314.5 221.0V235.8M320.5 194.2V197.0M320.5 209.0V213.3M335.5 202.5V209.0M335.5 218.0V223.3M346.5 202.5V213.0M346.5 215.0V215.8M351.5 201.3V211.0M351.5 212.0V218.3M361.5 198.3V208.0M361.5 217.0V218.3M372.5 196.7V197.0M372.5 212.0V215.8M377.5 174.2V178.0M377.5 198.0V201.7M393.5 182.5V189.0M393.5 197.0V198.0M419.5 225.0V226.0M419.5 233.0V240.0M429.5 234.2V241.0M429.5 243.0V244.7M440.5 242.5V247.0M440.5 250.0V252.0M455.5 255.0V256.0M455.5 269.0V269.7M471.5 265.0V273.0M471.5 274.0V274.7M476.5 272.0V272.5M487.5 229.2V235.0M487.5 251.0V251.7M549.5 296.0V305.0M549.5 311.0V311.8M633.5 321.0V336.0M685.5 326.0V336.0M711.5 322.7V323.0M716.5 288.0V291.0M716.5 323.0V324.3M747.5 325.2V336.0M758.5 319.3V336.0M789.5 323.0V326.0M789.5 328.0V336.0M794.5 317.7V319.0M794.5 327.0V327.7M805.5 299.3V300.0M805.5 321.0V321.8M810.5 288.5V291.0M810.5 302.0V303.5M815.5 277.7V287.0M815.5 293.0V294.0M831.5 285.2V292.0M831.5 309.0V309.7M836.5 274.3V279.0M836.5 293.0V293.5M847.5 281.0V283.0M847.5 301.0V301.8M852.5 274.3V275.0M852.5 284.0V284.7M883.5 304.3V306.0M883.5 317.0V318.0M888.5 289.3V290.0M888.5 306.0V306.8M899.5 281.8V292.0M899.5 297.0V297.7M904.5 286.0V290.0M904.5 293.0V294.7M909.5 265.2V271.0M914.5 246.0V249.0M914.5 272.0V274.0M925.5 229.0V233.0M925.5 259.0V259.7M930.5 221.8V231.0M930.5 233.0V234.7M946.5 228.0V234.0M946.5 252.0V252.7" stroke="#62b8a2" stroke-width="1" fill="none"/><path d="M63.5 188.5h2V212.5h-2zM68.5 171.5h2V188.5h-2zM79.5 185.5h2V186.5h-2zM89.5 160.5h2V188.5h-2zM105.5 178.5h2V186.5h-2zM120.5 189.5h2V194.5h-2zM125.5 180.5h2V190.5h-2zM131.5 160.5h2V180.5h-2zM136.5 155.5h2V160.5h-2zM141.5 113.5h2V154.5h-2zM152.5 104.5h2V116.5h-2zM167.5 120.5h2V134.5h-2zM183.5 144.5h2V153.5h-2zM199.5 167.5h2V172.5h-2zM214.5 182.5h2V190.5h-2zM235.5 210.5h2V221.5h-2zM251.5 229.5h2V234.5h-2zM256.5 216.5h2V225.5h-2zM261.5 210.5h2V216.5h-2zM272.5 220.5h2V240.5h-2zM292.5 237.5h2V248.5h-2zM303.5 235.5h2V240.5h-2zM308.5 221.5h2V234.5h-2zM313.5 208.5h2V220.5h-2zM319.5 197.5h2V208.5h-2zM334.5 209.5h2V217.5h-2zM345.5 213.5h2V214.5h-2zM350.5 211.5h2V211.5h-2zM360.5 208.5h2V216.5h-2zM371.5 197.5h2V211.5h-2zM376.5 178.5h2V197.5h-2zM392.5 189.5h2V196.5h-2zM418.5 226.5h2V232.5h-2zM428.5 241.5h2V242.5h-2zM439.5 247.5h2V249.5h-2zM454.5 256.5h2V268.5h-2zM470.5 273.5h2V273.5h-2zM475.5 243.5h2V271.5h-2zM486.5 235.5h2V250.5h-2zM548.5 305.5h2V310.5h-2zM632.5 336.5h2V336.5h-2zM684.5 336.5h2V336.5h-2zM710.5 323.5h2V335.5h-2zM715.5 291.5h2V322.5h-2zM746.5 336.5h2V336.5h-2zM757.5 336.5h2V336.5h-2zM788.5 326.5h2V327.5h-2zM793.5 319.5h2V326.5h-2zM804.5 300.5h2V320.5h-2zM809.5 291.5h2V301.5h-2zM814.5 287.5h2V292.5h-2zM830.5 292.5h2V308.5h-2zM835.5 279.5h2V292.5h-2zM846.5 283.5h2V300.5h-2zM851.5 275.5h2V283.5h-2zM882.5 306.5h2V316.5h-2zM887.5 290.5h2V305.5h-2zM898.5 292.5h2V296.5h-2zM903.5 290.5h2V292.5h-2zM908.5 271.5h2V290.5h-2zM913.5 249.5h2V271.5h-2zM924.5 233.5h2V258.5h-2zM929.5 231.5h2V232.5h-2zM945.5 234.5h2V251.5h-2z" stroke="#62b8a2" stroke-width="1" fill="#0f0f0f"/></g></svg>
<svg class="abs" style="left:306px;top:536px" width="19" height="19" viewBox="0 0 19 19"><circle cx="8.300" cy="8" r="5.600" fill="none" stroke="#e6e6e6" stroke-width="1.400"/><path d="M12.300 12.200L16.800 16.800" stroke="#e6e6e6" stroke-width="1.500"/></svg>
<div class="t" style="left:329.5px;top:538.15px;font-size:14px;color:#dbdbdb;font-weight:bold;letter-spacing:-0.27px">BTCUSD</div>
<svg class="abs" style="left:405px;top:535px" width="21" height="21" viewBox="0 0 21 21"><circle cx="10.500" cy="10.500" r="9.200" fill="none" stroke="#e6e6e6" stroke-width="1.100"/><path d="M10.500 5.500V15.500M5.500 10.500H15.500" stroke="#e6e6e6" stroke-width="1.100"/></svg>
<div class="abs" style="left:439px;top:534px;width:1px;height:22px;background:#3d3d3d"></div>
<div class="abs" style="left:446px;top:528px;width:29px;height:34px;border-radius:6px;background:#3a3a3a"></div>
<div class="t" style="left:451.8px;top:538.65px;font-size:14px;color:#dbdbdb;letter-spacing:-0.6px">1m</div>
<div class="t" style="left:483.5px;top:538.65px;font-size:14px;color:#dbdbdb;letter-spacing:0.1px">30m</div>
<div class="t" style="left:525.2px;top:538.65px;font-size:14px;color:#dbdbdb;letter-spacing:-0.5px">1h</div>
<svg class="abs" style="left:553px;top:541px" width="12" height="8" viewBox="0 0 12 8"><path d="M2.200 2.300L6 5.600L9.800 2.300" fill="none" stroke="#e6e6e6" stroke-width="1.100"/></svg>
<div class="abs" style="left:575px;top:534px;width:1px;height:22px;background:#3d3d3d"></div>
<svg class="abs" style="left:589px;top:534px" width="22" height="23" viewBox="0 0 22 23"><path d="M6.500 4V19.300M3 17.500H6.500M6.500 6.500H10.200M14.500 3.200V18.500M11.500 10.500H14.500M14.500 15.500H18.200" fill="none" stroke="#e6e6e6" stroke-width="1.150"/></svg>
<svg class="abs" style="left:626px;top:533px" width="22" height="24" viewBox="0 0 22 24"><g fill="none" stroke="#e6e6e6" stroke-width="1.100"><path d="M7.500 2V5.400M7.500 18V21.800M15.500 5V8M15.500 16.400V19.200"/><rect x="5.700" y="5.400" width="3.600" height="12.600" rx=".6"/><rect x="13.700" y="8" width="3.600" height="8.400" rx=".6"/></g></svg>
<svg class="abs" style="left:661px;top:534px" width="27" height="21" viewBox="0 0 27 21"><defs><pattern id="dots" width="2" height="2" patternUnits="userSpaceOnUse"><rect x="0" y="0" width="1" height="1" fill="#e6e6e6"/><rect x="1" y="1" width="1" height="1" fill="#e6e6e6"/></pattern></defs><path d="M1.500 19.500L10 11L14.500 14.500L25 5V19.500z" fill="url(#dots)"/><path d="M1.500 15L10 7L14.500 10.500L25 1.500" fill="none" stroke="#e6e6e6" stroke-width="1.200"/></svg>
<div class="abs" style="left:696px;top:528px;width:34px;height:34px;border-radius:6px;background:#3a3a3a"></div>
<svg class="abs" style="left:702px;top:533px" width="22" height="24" viewBox="0 0 22 24"><g fill="none" stroke="#e6e6e6" stroke-width="1.100"><path d="M7.500 2V5.400M7.500 18V21.800M15.500 5V8M15.500 16.400V19.200"/><rect x="5.700" y="5.400" width="3.600" height="12.600" rx=".6" fill="url(#dots)"/><rect x="13.700" y="8" width="3.600" height="8.400" rx=".6"/></g></svg>
<svg class="abs" style="left:738px;top:541px" width="12" height="8" viewBox="0 0 12 8"><path d="M2.200 2.300L6 5.600L9.800 2.300" fill="none" stroke="#e6e6e6" stroke-width="1.100"/></svg>
<div class="abs" style="left:760px;top:534px;width:1px;height:22px;background:#3d3d3d"></div>
<svg class="abs" style="left:774px;top:534px" width="22" height="22" viewBox="0 0 22 22"><g fill="none" stroke="#e6e6e6" stroke-width="1.150"><path d="M2 7.500L6.500 3.500L11 6.500L18.500 1.500"/><path d="M2.500 19.500V15.500H6.500V19.500M6.500 19.500V13H10.500V19.500M10.500 19.500V15H14.500V19.500M14.500 19.500V9.500H18.500V19.500H2.500"/></g></svg>
<div class="t" style="left:802.3px;top:538.65px;font-size:14px;color:#dbdbdb;letter-spacing:0.25px">Indicators</div>
<svg class="abs" style="left:1362px;top:535px" width="24" height="20" viewBox="0 0 24 20"><g fill="none" stroke="#e6e6e6" stroke-width="1.100"><path d="M1.500 6A1.500 1.500 0 0 1 3 4.500H6.500L8 1.800H15.500L17 4.500H20.500A1.500 1.500 0 0 1 22 6V16.500A1.500 1.500 0 0 1 20.500 18H3A1.500 1.500 0 0 1 1.500 16.500z"/><circle cx="11.800" cy="11" r="3.800"/></g></svg>
<div class="abs" style="left:306px;top:576px;width:34px;height:34px;border-radius:6px;background:#3a3a3a"></div>
<svg class="abs" style="left:311px;top:581px" width="24" height="24" viewBox="0 0 24 24"><path d="M12 1V8M12 16.500V23.500M1 12.300H8.500M15.500 12.300H23" stroke="#e6e6e6" stroke-width="1.100" fill="none"/></svg>
<svg class="abs" style="left:310px;top:618px" width="26" height="26" viewBox="0 0 26 26"><g fill="none" stroke="#e6e6e6" stroke-width="1.100"><circle cx="21.600" cy="4.600" r="2.200"/><circle cx="4.300" cy="21.600" r="2.200"/><path d="M20 6.200L5.900 20"/></g></svg>
<svg class="abs" style="left:308px;top:655px" width="30" height="28" viewBox="0 0 30 28"><g fill="none" stroke="#e6e6e6" stroke-width="1.100"><path d="M4.200 4.500H26.200M4.200 10.600H23.500M4.200 16.300H26.200M6.500 22.400H26.200"/><circle cx="25.700" cy="10.600" r="2.200" fill="#0f0f0f"/><circle cx="4.300" cy="22.400" r="2.200"/></g></svg>
<svg class="abs" style="left:309px;top:693px" width="28" height="28" viewBox="0 0 28 28"><g fill="none" stroke="#e6e6e6" stroke-width="1.050"><path d="M8.300 5.600L5.500 22.200L12.900 12.300zM12.900 12.300L20.600 6L23.400 19.500zM8.300 5.600L12.900 12.300"/><g fill="#0f0f0f"><circle cx="8.300" cy="5.600" r="2.100"/><circle cx="20.600" cy="6" r="2.100"/><circle cx="12.900" cy="12.300" r="2.100"/><circle cx="5.500" cy="22.200" r="2.100"/><circle cx="23.400" cy="19.500" r="2.100"/></g></g></svg>
<svg class="abs" style="left:309px;top:731px" width="28" height="28" viewBox="0 0 28 28"><g fill="none" stroke="#e6e6e6" stroke-width="1.050"><path d="M6.700 6.200H23.400M6.700 16.300H20.500M6.700 22H23.400"/><path d="M9.500 13.800L22 8.600" stroke-dasharray="1.300 2.200"/><circle cx="4.500" cy="6.200" r="2.100"/><circle cx="4.500" cy="16.300" r="2.100"/><circle cx="22.700" cy="16.300" r="2.100" fill="#0f0f0f"/><circle cx="4.500" cy="22" r="2.100"/></g></svg>
<svg class="abs" style="left:309px;top:772px" width="30" height="24" viewBox="0 0 30 24"><g fill="none" stroke="#e6e6e6" stroke-width="1.100" stroke-linejoin="round"><path d="M3 19.500C5 14 9 9.500 14.500 9.200C17 12 16 17.500 11.500 19.300z"/><path d="M15.800 6.500C15.500 9 17.500 10.500 19.800 9.200L27 4"/></g></svg>
<svg class="abs" style="left:314px;top:811px" width="20" height="21" viewBox="0 0 20 21"><path d="M2.500 5V2.500H17V5M9.800 2.500V18.500M7 18.500H12.600" fill="none" stroke="#e6e6e6" stroke-width="1.100"/></svg>
<div class="abs" style="left:362px;top:575px;width:18px;height:18px;border-radius:50%;background:#f08d36"></div>
<div class="t" style="left:367.300px;top:578.500px;font-size:11px;font-weight:bold;color:#fff;transform:rotate(12deg)">B</div><div class="abs" style="left:369.800px;top:577.500px;width:1px;height:2px;background:#fff;transform:rotate(12deg)"></div><div class="abs" style="left:372px;top:578px;width:1px;height:2px;background:#fff;transform:rotate(12deg)"></div><div class="abs" style="left:368.300px;top:588.500px;width:1px;height:2px;background:#fff;transform:rotate(12deg)"></div><div class="abs" style="left:370.500px;top:589px;width:1px;height:2px;background:#fff;transform:rotate(12deg)"></div>
<div class="t" style="left:384.6px;top:576.76px;font-size:16px;color:#dbdbdb;letter-spacing:-0.125px">Bitcoin / U.S. Dollar · 1 · Coinbase</div>
<div class="abs" style="left:632.700px;top:575.200px;width:18px;height:18px;border-radius:50%;background:#12302b"></div><div class="abs" style="left:637px;top:579.500px;width:9.400px;height:9.400px;border-radius:50%;background:#4fb6a0"></div>
<div class="t" style="left:659px;top:578.92px;font-size:12.5px;color:#dbdbdb;">O</div>
<div class="t" style="left:671.7px;top:578.50px;font-size:13px;color:#cd434b;letter-spacing:0.62px">101,765.15</div>
<div class="t" style="left:748.5px;top:578.92px;font-size:12.5px;color:#dbdbdb;">H</div>
<div class="t" style="left:760px;top:578.50px;font-size:13px;color:#cd434b;letter-spacing:0.62px">101,800.00</div>
<div class="t" style="left:838px;top:578.92px;font-size:12.5px;color:#dbdbdb;">L</div>
<div class="t" style="left:846.7px;top:578.50px;font-size:13px;color:#cd434b;letter-spacing:0.62px">101,679.44</div>
<div class="t" style="left:924px;top:578.92px;font-size:12.5px;color:#dbdbdb;">C</div>
<div class="t" style="left:935px;top:578.50px;font-size:13px;color:#cd434b;letter-spacing:0.62px">101,679.44</div>
<div class="t" style="left:1013px;top:578.50px;font-size:13px;color:#cd434b;letter-spacing:0.54px">−85.72 (−0.08%)</div>
<div class="t" style="left:362.3px;top:602.00px;font-size:13px;color:#dbdbdb;letter-spacing:-0.4px">BB</div>
<div class="t" style="left:383.3px;top:602.00px;font-size:13px;color:#8e8e8e;letter-spacing:0.3px">20 close 2</div>
<div class="t" style="left:455px;top:602.00px;font-size:13px;color:#8f2b2f;letter-spacing:0.55px">101,489.09</div>
<div class="t" style="left:534.2px;top:602.00px;font-size:13px;color:#3a8481;letter-spacing:0.55px">101,951.78</div>
<div class="t" style="left:613px;top:602.00px;font-size:13px;color:#3a8481;letter-spacing:0.55px">101,026.41</div>
<div class="t" style="left:362.3px;top:626.00px;font-size:13px;color:#dbdbdb;letter-spacing:0.08px">Vol · BTC</div>
<div class="t" style="left:426px;top:626.00px;font-size:13px;color:#e0525a;">3</div>
<div class="abs" style="left:361px;top:647px;width:29px;height:21px;border-radius:3px;border:1px solid #3c3c3c"></div>
<svg class="abs" style="left:370px;top:654px" width="11" height="8" viewBox="0 0 11 8"><path d="M1.500 6L5.500 2L9.500 6" fill="none" stroke="#e6e6e6" stroke-width="1.300"/></svg>
<div class="t" style="left:1316px;top:567.74px;font-size:12px;color:#c9c9c9;letter-spacing:0.62px">103,250.00</div>
<div class="t" style="left:1316px;top:599.29px;font-size:12px;color:#c9c9c9;letter-spacing:0.62px">103,000.00</div>
<div class="t" style="left:1316px;top:630.84px;font-size:12px;color:#c9c9c9;letter-spacing:0.62px">102,750.00</div>
<div class="t" style="left:1316px;top:662.39px;font-size:12px;color:#c9c9c9;letter-spacing:0.62px">102,500.00</div>
<div class="t" style="left:1316px;top:693.94px;font-size:12px;color:#c9c9c9;letter-spacing:0.62px">102,250.00</div>
<div class="t" style="left:1316px;top:725.49px;font-size:12px;color:#c9c9c9;letter-spacing:0.62px">102,000.00</div>
<div class="t" style="left:1316px;top:757.04px;font-size:12px;color:#c9c9c9;letter-spacing:0.62px">101,750.00</div>
<div class="t" style="left:1316px;top:788.59px;font-size:12px;color:#c9c9c9;letter-spacing:0.62px">101,500.00</div>
<div class="t" style="left:1316px;top:820.14px;font-size:12px;color:#c9c9c9;letter-spacing:0.62px">101,250.00</div>
<div class="abs" style="left:1308px;top:731.0px;width:80px;height:16.400px;background:#2a8a8c"></div>
<div class="t" style="left:1316.5px;top:733.34px;font-size:12px;color:#fff;letter-spacing:0.66px">101,951.78</div>
<div class="abs" style="left:1308px;top:765.4px;width:80px;height:16.400px;background:#ea3c4e"></div>
<div class="t" style="left:1316.5px;top:767.74px;font-size:12px;color:#fff;letter-spacing:0.66px">101,679.44</div>
<div class="abs" style="left:1308px;top:789.3px;width:80px;height:16.400px;background:#8c2327"></div>
<div class="t" style="left:1316.5px;top:791.64px;font-size:12px;color:#fff;letter-spacing:0.66px">101,489.09</div>
<div class="abs" style="left:1308px;top:847.6px;width:80px;height:16.400px;background:#2a8a8c"></div>
<div class="t" style="left:1316.5px;top:849.94px;font-size:12px;color:#fff;letter-spacing:0.66px">101,026.41</div>
<!--CHART-END-->

<!--OVERLAYS-->
<div class="abs" style="left:1372px;top:773px;width:56px;height:56px;border-radius:50%;background:#d12f2e;box-shadow:0 2px 8px rgba(0,0,0,.3)"></div>
<svg class="abs" style="left:1385px;top:788.500px" width="30" height="28" viewBox="0 0 30 28"><path d="M15 2.500C22 2.500 27 6.200 27 11S22 19.500 15 19.500C13.300 19.500 11.800 19.300 10.400 18.900C9 20.800 7 22.200 5 22.500C6 21.200 6.600 19.400 6.400 17.500C4.200 15.900 3 13.600 3 11C3 6.200 8 2.500 15 2.500z" fill="#fff"/></svg>
<div class="abs" style="left:1373px;top:814px;width:14px;height:14px;border-radius:50%;background:#5fd068;border:2px solid #fff"></div>
<div class="abs" style="left:0;top:833px;width:334px;height:20px;background:#2b2b2b;border-top-right-radius:4px;border-top:1px solid #343434;border-right:1px solid #343434"></div>
<div class="t" style="left:5.3px;top:836.20px;font-size:13px;color:#dcdcdc;letter-spacing:-0.065px">https://fortnetstationservice.com/BrokerDashboard/index</div>
<!--OVERLAYS-END-->
</div>
</body>
</html>
